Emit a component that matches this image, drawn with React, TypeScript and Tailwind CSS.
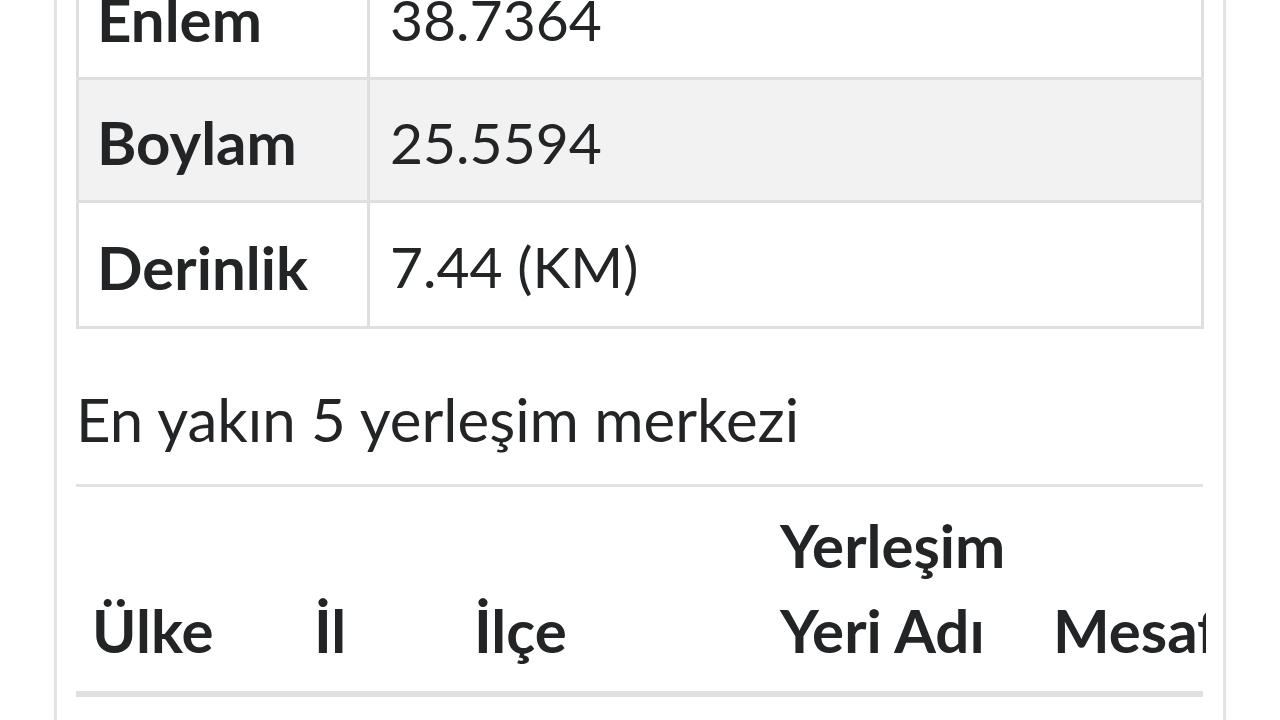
import React from "react";

const font = { fontFamily: 'Lato, "Noto Sans", sans-serif' };

export default function App() {
  const rows = [
    { k: "Enlem", v: "38.7364", bg: "bg-white" },
    { k: "Boylam", v: "25.5594", bg: "bg-[#f2f2f2]" },
    { k: "Derinlik", v: "7.44 (KM)", bg: "bg-white" },
  ];
  return (
    <div className="w-[1280px] h-[720px] overflow-hidden bg-white text-[#222426]" style={font}>
      <div className="mx-[54px] mt-[-46px] h-[800px] border-x-[3px] border-[#e4e4e4] px-[19px]">
        <div className="border-[3px] border-[#dfdfdf]">
          {rows.map((r, i) => (
            <div
              key={r.k}
              className={`flex h-[123px] ${i < 2 ? "border-b-[3px] border-[#dfdfdf]" : "h-[120px]"} ${r.bg}`}
            >
              <div className="flex w-[291px] shrink-0 items-center border-r-[3px] border-[#dfdfdf] pl-[18px] pt-[4px] text-[60px] font-bold leading-none">
                {r.k}
              </div>
              <div className="flex flex-1 items-center pl-[20px] pt-[4px] text-[57px] leading-none">{r.v}</div>
            </div>
          ))}
        </div>
        <h2 className="mt-[48px] text-[60px] font-normal leading-[85px]">En yakın 5 yerleşim merkezi</h2>
        <div className="mt-[22px] w-[1130px] overflow-hidden">
          <div className="w-[1127px] border-t-[3px] border-[#e2e2e2]" />
          <div className="flex w-[1400px] items-end pt-[16px] pb-[18px] text-[60px] font-bold leading-[85px]">
            <div className="w-[222px] shrink-0 pl-[16px]">Ülke</div>
            <div className="w-[160px] shrink-0 pl-[16px]">İl</div>
            <div className="w-[306px] shrink-0 pl-[16px]">İlçe</div>
            <div className="w-[273px] shrink-0 pl-[16px]">Yerleşim Yeri Adı</div>
            <div className="shrink-0 whitespace-nowrap pl-[16px]">Mesafe (km)</div>
          </div>
          <div className="w-[1127px] border-t-[6px] border-[#e0e0e0]" />
        </div>
      </div>
    </div>
  );
}
